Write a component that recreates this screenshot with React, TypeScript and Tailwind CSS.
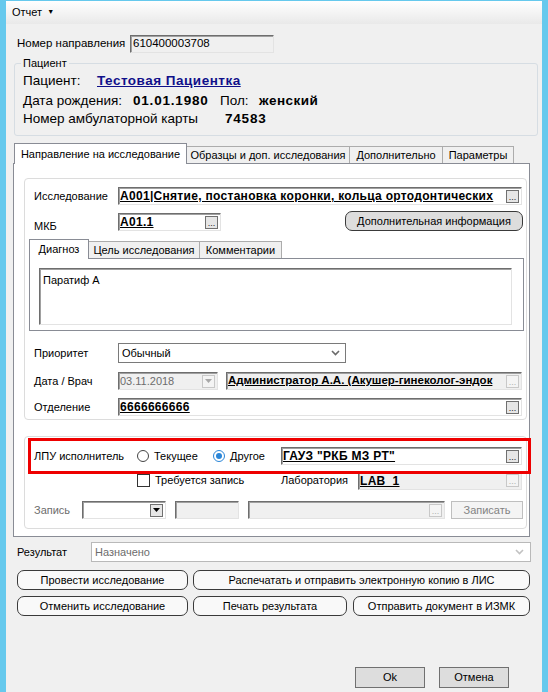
import React from "react";

const sunken =
  "border border-t-[#6e6e6e] border-l-[#6e6e6e] border-b-[#e3e3e3] border-r-[#e3e3e3] shadow-[inset_1px_1px_0_#a0a0a0]";

function Dots({ disabled }: { disabled?: boolean }) {
  return (
    <div
      className={
        disabled
          ? "w-[13px] h-[13px] border border-[#c8c8c8] bg-[#f4f4f4] text-[#b0b0b0] text-[9px] leading-[13px] text-center shrink-0 mr-[2px]"
          : "w-[13px] h-[13px] border border-[#707070] bg-[#e6e6e6] text-[#222] text-[9px] leading-[13px] text-center shrink-0 mr-[2px]"
      }
    >
      ...
    </div>
  );
}

function Field({
  w,
  text,
  bg,
  dots,
  dotsDisabled,
  tight,
}: {
  w: string;
  text?: string;
  bg?: string;
  dots?: boolean;
  dotsDisabled?: boolean;
  tight?: boolean;
}) {
  return (
    <div className={`${w} h-[18px] ${sunken} ${bg ?? "bg-white"} flex items-center pl-[1px]`}>
      <span
        className={
          tight
            ? "flex-1 min-w-0 font-bold underline text-[11.5px] tracking-normal leading-none whitespace-nowrap overflow-hidden"
            : "flex-1 min-w-0 font-bold underline text-[12px] tracking-[0.3px] leading-none whitespace-nowrap overflow-hidden"
        }
      >
        {text}
      </span>
      {dots && <Dots disabled={dotsDisabled} />}
    </div>
  );
}

function RoundBtn({ w, label, gray }: { w: string; label: string; gray?: boolean }) {
  return (
    <div
      className={`${w} h-[20px] rounded-[7px] border border-[#3a3a3a] ${
        gray ? "bg-[#dddddd]" : "bg-[#f9f9f9]"
      } flex items-center justify-center text-[11px] leading-none`}
    >
      {label}
    </div>
  );
}

function Chevron({ color }: { color: string }) {
  return (
    <svg width="9" height="6" viewBox="0 0 9 6">
      <path d="M1 1 L4.5 4.5 L8 1" fill="none" stroke={color} strokeWidth="1.6" />
    </svg>
  );
}

export default function App() {
  return (
    <div className="w-[548px] h-[692px] bg-[#f0f0f0] border-l-[6px] border-r-[6px] border-t border-[#66c9ed] font-['Liberation_Sans',Arial,sans-serif] text-[11px] text-black flex flex-col overflow-hidden">
      {/* menu bar */}
      <div className="h-[23px] bg-gradient-to-b from-[#ffffff] to-[#e9e9e9] flex items-center pl-[6px]">
        <span className="text-[11px]">Отчет</span>
        <span className="ml-[5px] text-[7px]">▼</span>
      </div>

      {/* номер направления */}
      <div className="mt-[11px] h-[18px] flex items-center pl-[11px]">
        <span className="w-[113px] text-[11.5px]">Номер направления</span>
        <div className={`w-[144px] h-[18px] ${sunken} bg-[#f0f0f0] flex items-center pl-[2px] text-[11.5px]`}>
          610400003708
        </div>
      </div>

      {/* Пациент groupbox */}
      <div className="relative ml-[8px] mt-[10px] w-[524px] h-[73px] border border-[#d6dde3] rounded-[3px] pl-[8px] pt-[8px] text-[13.5px]">
        <span className="absolute -top-[8px] left-[6px] px-[2px] bg-[#f0f0f0] text-[11px] leading-[14px]">
          Пациент
        </span>
        <div className="h-[18px] flex items-center">
          <span className="w-[74px]">Пациент:</span>
          <span className="font-bold underline text-[#10108a] tracking-[0.5px]">Тестовая Пациентка</span>
        </div>
        <div className="h-[18px] mt-[2px] flex items-center">
          <span className="w-[110px]">Дата рождения:</span>
          <span className="w-[87px] font-bold tracking-[0.8px]">01.01.1980</span>
          <span className="w-[39px]">Пол:</span>
          <span className="font-bold tracking-[0.5px]">женский</span>
        </div>
        <div className="h-[18px] flex items-center">
          <span className="w-[202px]">Номер амбулаторной карты</span>
          <span className="font-bold tracking-[0.8px]">74583</span>
        </div>
      </div>

      {/* Tabs */}
      <div className="ml-[7px] mt-[7px] w-[517px]">
        <div className="flex items-end h-[20px] pl-[1px]">
          <div className="relative z-10 -mb-px h-[21px] w-[173px] bg-white border border-b-0 border-[#898c95] flex items-center justify-center">
            Направление на исследование
          </div>
          <div className="h-[17px] w-[163px] border border-b-0 border-l-0 border-[#acacac] bg-[#f0f0f0] flex items-center justify-center">
            Образцы и доп. исследования
          </div>
          <div className="h-[17px] w-[93px] border border-b-0 border-l-0 border-[#acacac] bg-[#f0f0f0] flex items-center justify-center">
            Дополнительно
          </div>
          <div className="h-[17px] w-[71px] border border-b-0 border-l-0 border-[#acacac] bg-[#f0f0f0] flex items-center justify-center">
            Параметры
          </div>
        </div>
        <div className="h-[374px] bg-white border border-[#898c95] flex flex-col">
          {/* Groupbox 1 */}
          <div className="ml-[10px] mt-[14px] w-[503px] h-[242px] border border-[#dcdcdc] rounded-[4px] flex flex-col">
            <div className="mt-[8px] h-[18px] flex items-center pl-[9px]">
              <span className="w-[84px]">Исследование</span>
              <Field w="w-[404px]" text="A001|Снятие, постановка коронки, кольца ортодонтических" dots />
            </div>
            <div className="mt-[6px] h-[20px] flex pl-[9px]">
              <span className="w-[84px] self-end leading-none -mb-[1px]">МКБ</span>
              <div className="mt-[2px]">
                <Field w="w-[103px]" text="A01.1" dots />
              </div>
              <div className="ml-auto mr-[3px]">
                <RoundBtn w="w-[178px]" label="Дополнительная информация" gray />
              </div>
            </div>
            {/* sub tabs */}
            <div className="ml-[4px] mt-[8px] w-[495px]">
              <div className="flex items-end h-[19px]">
                <div className="relative z-10 -mb-px h-[20px] w-[60px] bg-white border border-b-0 border-[#898c95] flex items-center justify-center">
                  Диагноз
                </div>
                <div className="h-[17px] w-[111px] border border-b-0 border-l-0 border-[#acacac] bg-[#f0f0f0] flex items-center justify-center">
                  Цель исследования
                </div>
                <div className="h-[17px] w-[82px] border border-b-0 border-l-0 border-[#acacac] bg-[#f0f0f0] flex items-center justify-center">
                  Комментарии
                </div>
              </div>
              <div className="h-[73px] bg-white border border-[#898c95] pl-[9px] pt-[9px]">
                <div className={`w-[473px] h-[57px] ${sunken} bg-white pl-[3px] pt-[3px]`}>Паратиф А</div>
              </div>
            </div>
            <div className="mt-[12px] h-[20px] flex items-center pl-[9px]">
              <span className="w-[84px]">Приоритет</span>
              <div className="w-[228px] h-[20px] border border-[#7a7a7a] bg-white flex items-center pl-[3px]">
                <span className="flex-1">Обычный</span>
                <span className="mr-[5px] flex">
                  <Chevron color="#6a6a6a" />
                </span>
              </div>
            </div>
            <div className="mt-[9px] h-[18px] flex items-center pl-[9px]">
              <span className="w-[84px]">Дата / Врач</span>
              <div className={`w-[100px] h-[18px] ${sunken} bg-[#f0f0f0] flex items-center pl-[1px] text-[#6d6d6d]`}>
                <span className="flex-1">03.11.2018</span>
                <div className="w-[13px] h-[13px] border border-[#c8c8c8] bg-[#f4f4f4] mr-[2px] flex items-center justify-center">
                  <svg width="7" height="4" viewBox="0 0 7 4">
                    <path d="M0 0 L7 0 L3.5 4 Z" fill="#a8a8a8" />
                  </svg>
                </div>
              </div>
              <div className="ml-[8px]">
                <Field
                  w="w-[296px]"
                  text="Администратор А.А. (Акушер-гинеколог-эндок"
                  bg="bg-[#f0f0f0]"
                  dots
                  dotsDisabled
                  tight
                />
              </div>
            </div>
            <div className="mt-[8px] h-[18px] flex items-center pl-[9px]">
              <span className="w-[84px]">Отделение</span>
              <Field w="w-[404px]" text="6666666666" dots />
            </div>
          </div>

          {/* Groupbox 2 */}
          <div className="relative ml-[10px] mt-[16px] w-[503px] h-[93px] border border-[#dcdcdc] rounded-[4px] flex flex-col">
            <div className="mt-[10px] h-[18px] flex items-center pl-[9px]">
              <span className="w-[103px]">ЛПУ исполнитель</span>
              <div className="w-[76px] flex items-center">
                <div className="w-[12px] h-[12px] rounded-full border border-[#444] bg-white" />
                <span className="ml-[5px]">Текущее</span>
              </div>
              <div className="w-[68px] flex items-center">
                <div className="w-[12px] h-[12px] rounded-full border border-[#2a86d8] bg-white flex items-center justify-center">
                  <div className="w-[6px] h-[6px] rounded-full bg-[#2a86d8]" />
                </div>
                <span className="ml-[5px]">Другое</span>
              </div>
              <Field w="w-[241px]" text={'ГАУЗ "РКБ МЗ РТ"'} dots />
            </div>
            <div className="mt-[7px] h-[17px] flex items-center pl-[112px]">
              <div className="w-[13px] h-[13px] border border-[#333] bg-white" />
              <span className="ml-[5px] w-[126px]">Требуется запись</span>
              <span className="w-[77px]">Лаборатория</span>
              <Field w="w-[164px]" text="LAB_1" bg="bg-[#f0f0f0]" dots dotsDisabled />
            </div>
            <div className="mt-[12px] h-[18px] flex items-center pl-[9px]">
              <span className="w-[48px] text-[#6d6d6d]">Запись</span>
              <div className={`w-[84px] h-[18px] ${sunken} bg-white flex items-center justify-end`}>
                <div className="w-[13px] h-[13px] border border-[#707070] bg-[#e6e6e6] mr-[2px] flex items-center justify-center">
                  <svg width="7" height="4" viewBox="0 0 7 4">
                    <path d="M0 0 L7 0 L3.5 4 Z" fill="#000" />
                  </svg>
                </div>
              </div>
              <div className={`ml-[9px] w-[64px] h-[18px] ${sunken} bg-[#f0f0f0]`} />
              <div className={`ml-[9px] w-[197px] h-[18px] ${sunken} bg-[#f0f0f0] flex items-center justify-end`}>
                <Dots disabled />
              </div>
              <div className="ml-[6px] w-[72px] h-[18px] border border-[#bfbfbf] bg-[#f4f4f4] text-[#838383] flex items-center justify-center">
                Записать
              </div>
            </div>
            {/* red highlight annotation */}
            <div className="absolute left-[3px] top-[1px] w-[503px] h-[36px] border-[3px] border-[#ee0000] pointer-events-none" />
          </div>
        </div>
      </div>

      {/* Результат */}
      <div className="mt-[5px] h-[20px] flex items-center pl-[11px]">
        <span className="w-[74px]">Результат</span>
        <div className="w-[440px] h-[20px] border border-[#b9b9b9] bg-white flex items-center pl-[3px] text-[#6d6d6d]">
          <span className="flex-1">Назначено</span>
          <span className="mr-[6px] flex">
            <Chevron color="#c2c2c2" />
          </span>
        </div>
      </div>

      <div className="mt-[8px] flex pl-[11px]">
        <RoundBtn w="w-[171px]" label="Провести исследование" />
        <div className="ml-[5px]">
          <RoundBtn w="w-[337px]" label="Распечатать и отправить электронную копию в ЛИС" />
        </div>
      </div>
      <div className="mt-[6px] flex pl-[11px]">
        <RoundBtn w="w-[171px]" label="Отменить исследование" />
        <div className="ml-[5px]">
          <RoundBtn w="w-[154px]" label="Печать результата" />
        </div>
        <div className="ml-[6px]">
          <RoundBtn w="w-[177px]" label="Отправить документ в ИЗМК" />
        </div>
      </div>

      <div className="mt-[51px] flex pl-[349px]">
        <div className="w-[70px] h-[21px] border border-[#707070] bg-[#dddddd] flex items-center justify-center">
          Ok
        </div>
        <div className="ml-[14px] w-[70px] h-[21px] border border-[#707070] bg-[#dddddd] flex items-center justify-center">
          Отмена
        </div>
      </div>
    </div>
  );
}
